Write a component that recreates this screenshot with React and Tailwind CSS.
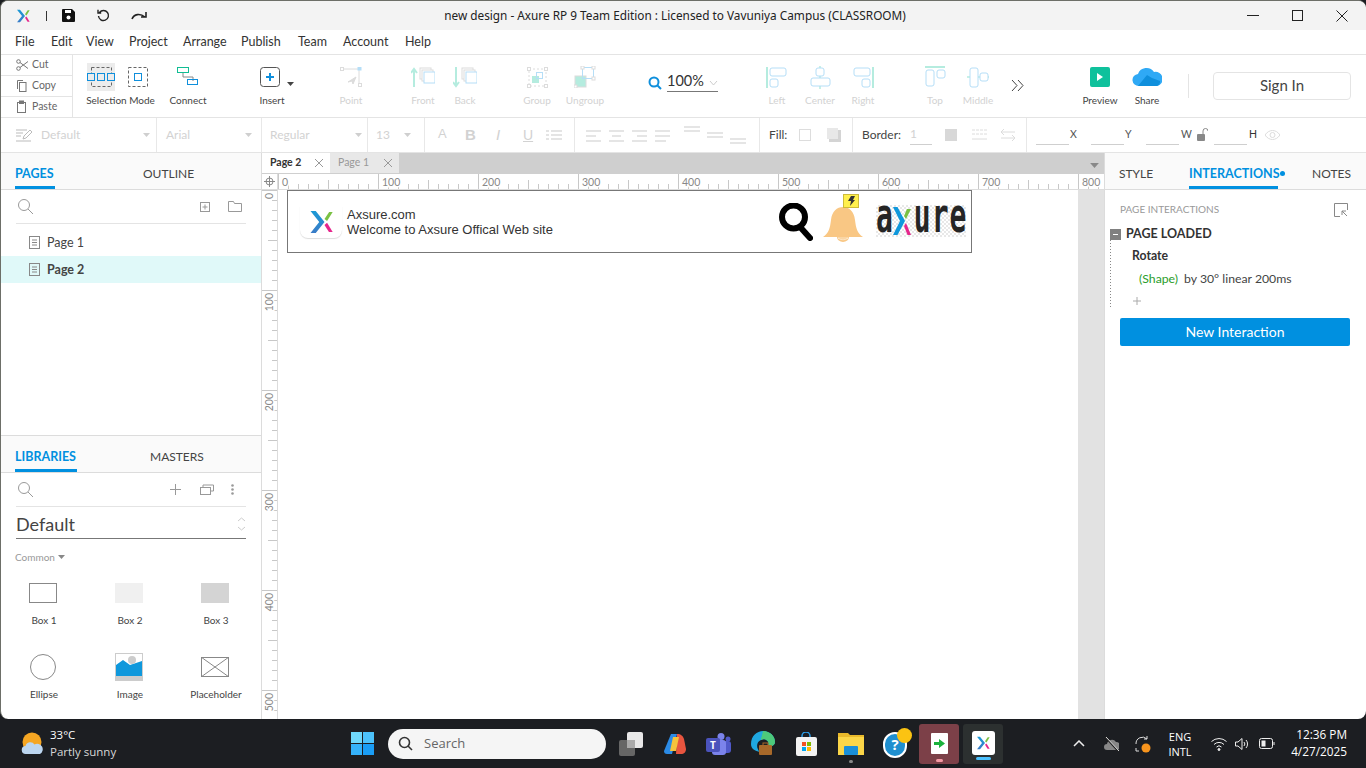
import React from "react";

const AxureX = ({ size = 24, className = "" }) => (
  <svg width={size} height={size} viewBox="0 0 24 24" className={className}>
    <defs>
      <linearGradient id="axg" x1="0" y1="0" x2="0" y2="1">
        <stop offset="0" stopColor="#1b9ad6" />
        <stop offset="1" stopColor="#3a7cc7" />
      </linearGradient>
    </defs>
    <path d="M3 2.500h4.500L15 12l-7.500 9.500H3L10.500 12z" fill="url(#axg)" />
    <path d="M15 9.500L19 3.500h3l-4.800 7.600z" fill="#7ac143" />
    <path d="M15 14.500l2.200-1.800L22 20.500h-3.200z" fill="#e6268c" />
  </svg>
);

const Caret = ({ className = "", color = "#cfcfcf" }) => (
  <svg width="7" height="4" viewBox="0 0 7 4" className={className}>
    <path d="M0 0h7L3.500 4z" fill={color} />
  </svg>
);

const Tool = ({ w, label, off, children }) => (
  <div className={`${w} flex flex-col items-center shrink-0 pt-[8px]`}>
    <div className="h-[28px] flex items-center justify-center gap-[13px] whitespace-nowrap">{children}</div>
    <div className={`mt-[3px] text-[10px] leading-[12px] whitespace-nowrap ${off ? "text-[#d2d2d2]" : "text-[#444]"}`}>{label}</div>
  </div>
);

const T = "#b5ecdf";
const B = "#b5def7";

const Arrange = ({ up }) => (
  <svg width="24" height="24" viewBox="0 0 24 24">
    <path d={up ? "M3 22V5M0 8l3-4 3 4" : "M3 2v19M0 17l3 4 3-4"} stroke={T} strokeWidth="2" fill="none" />
    <rect x="9" y="3" width="11" height="11" fill="#fff" stroke="#dcdcdc" />
    <rect x="11" y="5" width="11" height="11" fill="#fff" stroke="#dcdcdc" />
    <rect x="13" y="7" width="11" height="11" fill="#fff" stroke={B} />
  </svg>
);

const AlignIcon = ({ kind }) => {
  const m = {
    Left: <><path d="M1 1v21" stroke={T} strokeWidth="2" /><rect x="4" y="2" width="16" height="8" rx="2" fill="none" stroke={B} /><rect x="4" y="13" width="8" height="8" rx="2" fill="none" stroke={B} /></>,
    Center: <><path d="M11 0v23" stroke={T} strokeWidth="1.500" /><rect x="7" y="2" width="8" height="8" rx="2" fill="#fff" stroke={B} /><rect x="2" y="12" width="19" height="8" rx="2" fill="#fff" stroke={B} /></>,
    Right: <><path d="M21 1v21" stroke={T} strokeWidth="2" /><rect x="2" y="2" width="16" height="8" rx="2" fill="none" stroke={B} /><rect x="10" y="13" width="8" height="8" rx="2" fill="none" stroke={B} /></>,
    Top: <><path d="M1 1h20" stroke={T} strokeWidth="2" /><rect x="2" y="4" width="8" height="16" rx="2" fill="none" stroke={B} /><rect x="13" y="4" width="8" height="8" rx="2" fill="none" stroke={B} /></>,
    Middle: <><path d="M0 11h22" stroke={T} strokeWidth="1.500" /><rect x="3" y="2" width="8" height="19" rx="2" fill="#fff" stroke={B} /><rect x="13" y="7" width="8" height="8" rx="2" fill="#fff" stroke={B} /></>,
  };
  return <svg width="23" height="23" viewBox="0 0 23 23">{m[kind]}</svg>;
};

const ClipIcon = ({ name }) => {
  if (name === "Cut")
    return (
      <svg width="12" height="14" viewBox="0 0 12 14" fill="none" stroke="#777">
        <circle cx="2.500" cy="3.500" r="1.800" /><circle cx="2.500" cy="10.500" r="1.800" /><path d="M4 4.500l8 6M4 9.500l8-6" />
      </svg>
    );
  if (name === "Copy")
    return (
      <svg width="12" height="14" viewBox="0 0 12 14" fill="none" stroke="#777">
        <path d="M1.500 10V1.500H7" /><rect x="3.500" y="3.500" width="6.500" height="9" />
      </svg>
    );
  return (
    <svg width="12" height="14" viewBox="0 0 12 14" fill="none" stroke="#777">
      <rect x="1.500" y="2.500" width="8" height="10" /><rect x="3.500" y="1" width="4" height="2.500" fill="#777" />
    </svg>
  );
};

const Toolbar = () => (
  <div className="h-[63px] flex border-b border-[#e4e4e4] shrink-0">
    <div className="w-[72px] border-r border-[#e4e4e4] flex flex-col text-[10.500px] text-[#666] shrink-0">
      {["Cut", "Copy", "Paste"].map((l, i) => (
        <div key={l} className={`flex items-center pl-[15px] ${i < 2 ? "h-[21px] border-b border-[#e4e4e4]" : "flex-1"}`}>
          <ClipIcon name={l} />
          <span className="ml-[4px]">{l}</span>
        </div>
      ))}
    </div>
    <div className="ml-[12px]" />
    <Tool w="w-[71px]" label="Selection Mode">
      <div className="w-[28px] h-[28px] bg-[#ececec] flex items-center justify-center">
        <svg width="28" height="28" viewBox="0 0 28 28" fill="none">
          <rect x="4.500" y="4.500" width="20" height="19" stroke="#666" strokeDasharray="3 2" />
          <rect x="0.500" y="10.500" width="7" height="7" fill="#ececec" stroke="#0f8fdc" />
          <rect x="10.500" y="10.500" width="7" height="7" fill="#ececec" stroke="#0f8fdc" />
          <rect x="20.500" y="10.500" width="7" height="7" fill="#ececec" stroke="#0f8fdc" />
        </svg>
      </div>
      <svg width="20" height="20" viewBox="0 0 20 20" fill="none" className="mr-[7px]">
        <rect x="0.500" y="0.500" width="19" height="19" stroke="#666" strokeDasharray="3 2" />
        <rect x="6.500" y="6.500" width="7" height="7" stroke="#0f8fdc" />
      </svg>
    </Tool>
    <div className="ml-[12px]" />
    <Tool w="w-[40px]" label="Connect">
      <svg width="22" height="20" viewBox="0 0 22 20" fill="none">
        <path d="M6 6v4h10v4" stroke="#888" />
        <rect x="0.500" y="0.500" width="11" height="5" stroke="#11bd94" />
        <rect x="10.500" y="12.500" width="10" height="5" stroke="#0f8fdc" />
      </svg>
    </Tool>
    <div className="ml-[44px]" />
    <div className="relative">
      <Tool w="w-[40px]" label="Insert">
        <svg width="20" height="20" viewBox="0 0 20 20" fill="none" className="mr-[4px]">
          <rect x="0.500" y="0.500" width="19" height="19" rx="3" stroke="#555" />
          <path d="M10 6v8M6 10h8" stroke="#0f8fdc" strokeWidth="2" />
        </svg>
      </Tool>
      <Caret className="absolute left-[35px] top-[27px]" color="#444" />
    </div>
    <div className="ml-[39px]" />
    <Tool w="w-[40px]" label="Point" off>
      <svg width="22" height="20" viewBox="0 0 22 20" fill="none" stroke="#dcdcdc">
        <path d="M3 2h15M19 3v13" />
        <rect x="0.500" y="0.500" width="3" height="3" />
        <rect x="18" y="0" width="3" height="3" fill={B} stroke={B} />
        <rect x="18.500" y="16.500" width="3" height="3" />
        <path d="M8 15l8-5-3 7-1-3z" fill="#dcdcdc" />
      </svg>
    </Tool>
    <div className="ml-[32px]" />
    <Tool w="w-[40px]" label="Front" off><Arrange up /></Tool>
    <div className="ml-[2px]" />
    <Tool w="w-[40px]" label="Back" off><Arrange /></Tool>
    <div className="ml-[32px]" />
    <Tool w="w-[40px]" label="Group" off>
      <svg width="21" height="21" viewBox="0 0 21 21" fill="none">
        <rect x="2" y="2" width="17" height="17" stroke="#dcdcdc" strokeDasharray="2 2" />
        {[[0, 0], [17, 0], [0, 17], [17, 17]].map(([x, y]) => <rect key={x + "-" + y} x={x + .5} y={y + .5} width="3" height="3" fill="#fff" stroke="#dcdcdc" />)}
        <rect x="5" y="9" width="7" height="7" fill={T} />
        <rect x="9.500" y="5.500" width="6" height="6" stroke={B} />
      </svg>
    </Tool>
    <div className="ml-[4px]" />
    <Tool w="w-[48px]" label="Ungroup" off>
      <svg width="22" height="22" viewBox="0 0 22 22" fill="none">
        <rect x="1" y="10" width="11" height="11" fill={T} stroke="#dcdcdc" />
        <rect x="8.500" y="1.500" width="11" height="11" stroke={B} />
        <rect x="7" y="0" width="3" height="3" fill="#fff" stroke="#dcdcdc" /><rect x="18" y="0" width="3" height="3" fill="#fff" stroke="#dcdcdc" /><rect x="18" y="11" width="3" height="3" fill="#fff" stroke="#dcdcdc" /><rect x="0" y="19" width="3" height="3" fill="#fff" stroke="#dcdcdc" />
      </svg>
    </Tool>
    <div className="ml-[39px]" />
    <div className="w-[70px] shrink-0 flex items-start pt-[15px]">
      <svg width="14" height="14" viewBox="0 0 14 14" fill="none" className="mt-[6px]" stroke="#0f8fdc" strokeWidth="2"><circle cx="6" cy="6" r="4.500" /><path d="M9.500 9.500L13 13" /></svg>
      <div className="ml-[5px] w-[51px] h-[22px] border-b border-[#777] text-[14.500px] leading-[22px] text-[#333] flex items-center justify-between">
        <span>100%</span>
        <svg width="9" height="5" viewBox="0 0 9 5" fill="none" stroke="#ccc" className="mt-[5px]"><path d="M1 0l3.500 4L8 0" /></svg>
      </div>
    </div>
    <div className="ml-[39px]" />
    <Tool w="w-[40px]" label="Left" off><AlignIcon kind="Left" /></Tool>
    <div className="ml-[3px]" />
    <Tool w="w-[40px]" label="Center" off><AlignIcon kind="Center" /></Tool>
    <div className="ml-[3px]" />
    <Tool w="w-[40px]" label="Right" off><AlignIcon kind="Right" /></Tool>
    <div className="ml-[32px]" />
    <Tool w="w-[40px]" label="Top" off><AlignIcon kind="Top" /></Tool>
    <div className="ml-[3px]" />
    <Tool w="w-[40px]" label="Middle" off><AlignIcon kind="Middle" /></Tool>
    <div className="ml-[11px]" />
    <div className="w-[16px] shrink-0 flex justify-center pt-[25px]">
      <svg width="13" height="11" viewBox="0 0 13 11" fill="none" stroke="#444"><path d="M1 0l5 5.500L1 11M7 0l5 5.500L7 11" /></svg>
    </div>
    <div className="ml-[55px]" />
    <Tool w="w-[40px]" label="Preview">
      <div className="w-[20px] h-[20px] rounded-[2px] bg-[#0fc19c] flex items-center justify-center">
        <svg width="8" height="8" viewBox="0 0 8 8"><path d="M1 0l6 4-6 4z" fill="#fff" /></svg>
      </div>
    </Tool>
    <div className="ml-[7px]" />
    <Tool w="w-[40px]" label="Share">
      <svg width="30" height="20" viewBox="0 0 30 20">
        <path d="M7 19a6 6 0 01-1-12 9 9 0 0116-2 7 7 0 013 14z" fill="#2fa9f5" />
        <path d="M6 19l9-11 5 3 8 3a5 5 0 01-3 5z" fill="#0f8fdc" />
      </svg>
    </Tool>
    <div className="ml-[21px] mt-[19px] w-px h-[24px] bg-[#e4e4e4]" />
    <div className="ml-[24px] mt-[17px] w-[138px] h-[28px] border border-[#e4e4e4] rounded-[4px] flex items-center justify-center text-[15px] text-[#444] pb-[1px]">Sign In</div>
  </div>
);

const Line = ({ w, ml = "" }) => <div className={`${w} ${ml} border-b border-[#cfcfcf] h-[20px]`} />;

const BarLines = ({ rows }) => (
  <svg width="16" height="18" viewBox="0 0 16 18" stroke="#dcdcdc" strokeWidth="1.500">
    {rows.map(([a, b, y]) => <path key={y} d={`M${a} ${y}H${b}`} />)}
  </svg>
);

const FormatBar = () => (
  <div className="h-[35px] flex border-b border-[#e4e4e4] shrink-0 text-[12px] text-[#d2d2d2]">
    <div className="w-[156px] border-r border-[#e8e8e8] flex items-center pl-[15px] shrink-0">
      <svg width="16" height="13" viewBox="0 0 16 13" fill="none" stroke="#bbb"><path d="M0 1h11M0 4h7M0 7h5M0 12h15M7 10l1-3 6-6 2 2-6 6z" /></svg>
      <span className="ml-[9px] w-[60px]">Default</span><Caret className="ml-[42px]" />
    </div>
    <div className="w-[105px] border-r border-[#e8e8e8] flex items-center pl-[9px] shrink-0"><span className="w-[30px]">Arial</span><Caret className="ml-[49px]" /></div>
    <div className="w-[106px] border-r border-[#e8e8e8] flex items-center pl-[8px] shrink-0"><span className="w-[45px]">Regular</span><Caret className="ml-[40px]" /></div>
    <div className="w-[57px] border-r border-[#e8e8e8] flex items-center pl-[8px] shrink-0"><span className="w-[17px]">13</span><Caret className="ml-[11px]" /></div>
    <div className="w-[150px] border-r border-[#e8e8e8] flex items-center pl-[13px] shrink-0 text-[13px] font-['Liberation_Sans']">
      <span className="w-[27px] -mt-[3px]">A</span>
      <span className="w-[31px] font-bold text-[15px]">B</span>
      <span className="w-[27px] italic text-[15px]">I</span>
      <span className="w-[23px] underline text-[14px]">U</span>
      <svg width="16" height="12" viewBox="0 0 16 12" stroke="#dcdcdc" strokeWidth="1.500"><path d="M5 2h11M5 6h11M5 10h11M0 2h3M0 6h3M0 10h3" /></svg>
    </div>
    <div className="w-[185px] border-r border-[#e8e8e8] flex items-center pl-[11px] shrink-0">
      <div className="flex gap-[7px] mt-[1px]">
        <BarLines rows={[[0, 15, 4], [0, 10, 9], [0, 15, 14]]} />
        <BarLines rows={[[0, 15, 4], [3, 12, 9], [0, 15, 14]]} />
        <BarLines rows={[[0, 15, 4], [5, 15, 9], [0, 15, 14]]} />
        <BarLines rows={[[0, 15, 4], [0, 15, 9], [0, 11, 14]]} />
      </div>
      <div className="ml-[13px] flex gap-[7px]">
        <BarLines rows={[[0, 16, 1], [0, 16, 5]]} />
        <BarLines rows={[[0, 16, 7], [0, 16, 11]]} />
        <BarLines rows={[[0, 16, 13], [0, 16, 17]]} />
      </div>
    </div>
    <div className="w-[93px] border-r border-[#e8e8e8] flex items-center pl-[9px] shrink-0">
      <span className="text-[#444] w-[17px]">Fill:</span>
      <div className="ml-[13px] w-[12px] h-[12px] border border-[#ddd]" />
      <svg width="14" height="14" viewBox="0 0 14 14" className="ml-[16px]"><rect x="2" y="2" width="12" height="12" fill="#d4d4d4" /><rect width="11" height="11" fill="#e8e8e8" /></svg>
    </div>
    <div className="w-[174px] border-r border-[#e8e8e8] flex items-center pl-[9px] shrink-0">
      <span className="text-[#444] w-[39px]">Border:</span>
      <div className="ml-[9px] w-[22px] h-[20px] border-b border-[#cfcfcf] leading-[18px]">1</div>
      <div className="ml-[13px] w-[12px] h-[12px] bg-[#d8d8d8]" />
      <svg width="15" height="12" viewBox="0 0 15 12" className="ml-[15px]" stroke="#dcdcdc"><path d="M0 1h15M0 5h15" strokeDasharray="3 1" /><path d="M0 10h15" /></svg>
      <svg width="15" height="12" viewBox="0 0 15 12" fill="none" className="ml-[14px]" stroke="#dcdcdc"><path d="M0 3h14M3 0L0 3l3 3M0 9h14M11 6l3 3-3 3" /></svg>
    </div>
    <div className="flex items-center pl-[9px] text-[10.500px] text-[#555] pb-[1px]">
      <Line w="w-[33px]" /><span className="ml-[1px] w-[21px]">X</span>
      <Line w="w-[33px]" /><span className="ml-[1px] w-[21px]">Y</span>
      <Line w="w-[33px]" /><span className="ml-[2px] w-[16px]">W</span>
      <svg width="11" height="13" viewBox="0 0 11 13" fill="none"><path d="M6 6V3a2.500 2.500 0 015 0" stroke="#888" /><rect y="6" width="8" height="7" rx="1" fill="#888" /></svg>
      <Line w="w-[33px]" ml="ml-[6px]" /><span className="ml-[2px] w-[16px] text-[#333]">H</span>
      <svg width="15" height="10" viewBox="0 0 15 10" fill="none" stroke="#dcdcdc"><path d="M0 5c4-6 11-6 15 0-4 6-11 6-15 0z" /><circle cx="7.500" cy="5" r="2.500" /></svg>
    </div>
  </div>
);

const Tabs = ({ items, active }) => (
  <div className="h-[37px] bg-[#fafafa] border-b border-[#dcdcdc] flex shrink-0 text-[12px]">
    {items.map(([l, w, cls]) => (
      <div key={l} className={`${w} ${cls} shrink-0 h-[36px] flex items-center whitespace-nowrap ${l === active ? "text-[#0090e0] text-[12.500px] font-bold border-b-[3px] border-[#0090e0] pt-[9px]" : "text-[#444] pt-[6px]"}`}>
        {l}
      </div>
    ))}
  </div>
);

const SearchIcon = () => (
  <svg width="15" height="15" viewBox="0 0 15 15" fill="none" stroke="#999"><circle cx="6" cy="6" r="5.500" /><path d="M10 10l5 5" /></svg>
);

const PageIcon = () => (
  <svg width="11" height="13" viewBox="0 0 11 13" fill="none" stroke="#888"><rect x="0.500" y="0.500" width="10" height="12" /><path d="M3 4h5M3 6.500h5M3 9h5" /></svg>
);

const Widget = ({ label, children }) => (
  <div className="flex flex-col items-center w-[86px]">
    <div className="h-[28px] flex items-center justify-center">{children}</div>
    <div className="mt-[7px] ml-[2px] text-[10px] leading-[12px] text-[#444]">{label}</div>
  </div>
);

const LeftPanel = () => (
  <div className="w-[261px] border-r border-[#dcdcdc] flex flex-col shrink-0 h-full">
    <Tabs active="PAGES" items={[["PAGES", "w-[40px]", "ml-[14px]"], ["OUTLINE", "w-[52px]", "ml-[88px]"]]} />
    <div className="h-[246px] border-b border-[#dcdcdc] shrink-0">
      <div className="mx-[15px] h-[34px] border-b border-[#e4e4e4] flex items-center pl-[2px]">
        <SearchIcon />
        <svg width="10" height="10" viewBox="0 0 10 10" fill="none" stroke="#999" className="ml-[167px]"><rect x="0.500" y="0.500" width="9" height="9" /><path d="M5 2.500v5M2.500 5h5" /></svg>
        <svg width="14" height="11" viewBox="0 0 14 11" fill="none" stroke="#999" className="ml-[18px]"><path d="M.5 10.500V.5h5l1 2h7v8z" /></svg>
      </div>
      <div className="mt-[5px]">
        <div className="h-[27px] flex items-center pl-[28px] text-[12.500px] text-[#444]"><PageIcon /><span className="ml-[7px] pt-[1px]">Page 1</span></div>
        <div className="h-[27px] flex items-center pl-[28px] text-[12.500px] text-[#444] font-bold bg-[#e0f9f9]"><PageIcon /><span className="ml-[7px] pt-[1px]">Page 2</span></div>
      </div>
    </div>
    <Tabs active="LIBRARIES" items={[["LIBRARIES", "w-[62px]", "ml-[14px]"], ["MASTERS", "w-[56px]", "ml-[73px]"]]} />
    <div className="mx-[15px] h-[34px] border-b border-[#e4e4e4] flex items-center pl-[2px] shrink-0">
      <SearchIcon />
      <svg width="11" height="11" viewBox="0 0 11 11" fill="none" stroke="#999" className="ml-[137px]"><path d="M5.500 0v11M0 5.500h11" /></svg>
      <svg width="14" height="11" viewBox="0 0 14 11" fill="none" stroke="#999" className="ml-[19px]"><rect x="0.500" y="3.500" width="10" height="7" /><path d="M3 3V1h8M11 1h2.500v6H11" /></svg>
      <svg width="3" height="11" viewBox="0 0 3 11" fill="#999" className="ml-[17px]"><circle cx="1.500" cy="1.500" r="1.300" /><circle cx="1.500" cy="5.500" r="1.300" /><circle cx="1.500" cy="9.500" r="1.300" /></svg>
    </div>
    <div className="mx-[15px] h-[32px] border-b border-[#777] flex items-center justify-between text-[18px] text-[#444] shrink-0">
      <span className="pt-[3px]">Default</span>
      <svg width="9" height="14" viewBox="0 0 9 14" fill="none" stroke="#ccc" className="mr-[0px] mt-[3px]"><path d="M1 4l3.500-3L8 4M1 10l3.500 3L8 10" /></svg>
    </div>
    <div className="ml-[14px] mt-[11px] h-[14px] flex items-center text-[10px] text-[#999] shrink-0">Common <Caret className="ml-[3px]" color="#888" /></div>
    <div className="grid grid-cols-[86px_86px_86px] -ml-[1px] mt-[15px] gap-y-[27px]">
      <Widget label="Box 1"><div className="w-[28px] h-[20px] border border-[#888]" /></Widget>
      <Widget label="Box 2"><div className="w-[28px] h-[20px] bg-[#f0f0f0]" /></Widget>
      <Widget label="Box 3"><div className="w-[28px] h-[20px] bg-[#d4d4d4]" /></Widget>
      <Widget label="Ellipse"><div className="w-[26px] h-[26px] rounded-full border border-[#888]" /></Widget>
      <Widget label="Image">
        <svg width="28" height="28" viewBox="0 0 28 28"><rect width="28" height="28" fill="#fff" /><rect x="0.500" y="0.500" width="27" height="27" fill="none" stroke="#ccc" /><path d="M1 24V12l7-5 7 5 12-4v16z" fill="#0f98dc" /><circle cx="17" cy="7" r="4" fill="#ccc" /><rect y="23" width="28" height="5" fill="#ccc" /></svg>
      </Widget>
      <Widget label="Placeholder">
        <svg width="28" height="20" viewBox="0 0 28 20" fill="none" stroke="#888"><rect x="0.500" y="0.500" width="27" height="19" /><path d="M0 0l28 20M28 0L0 20" /></svg>
      </Widget>
    </div>
  </div>
);

const HRuler = () => {
  const ticks = [];
  for (let v = 0; v <= 820; v += 10) ticks.push(v);
  return (
    <svg width="826" height="15" viewBox="0 0 826 15" className="shrink-0">
      {ticks.map((v) => {
        const top = v % 100 === 0 ? 0 : v % 50 === 0 ? 6 : 10;
        return <path key={v} d={`M${v + .5} ${top}V15`} stroke="#c8c8c8" />;
      })}
      {[0, 100, 200, 300, 400, 500, 600, 700, 800].map((v) => (
        <text key={v} x={v + 4} y="12" fontSize="10.500" fill="#888" stroke="#fff" strokeWidth="3" paintOrder="stroke" fontFamily="Lato">{v}</text>
      ))}
    </svg>
  );
};

const VRuler = () => {
  const ticks = [];
  for (let v = 0; v <= 530; v += 10) ticks.push(v);
  return (
    <svg width="15" height="529" viewBox="0 0 15 529" className="shrink-0">
      {ticks.map((v) => {
        const left = v % 100 === 0 ? 0 : v % 50 === 0 ? 6 : 10;
        return <path key={v} d={`M${left} ${v + .5}H15`} stroke="#c8c8c8" />;
      })}
      {[0, 100, 200, 300, 400, 500].map((v) => (
        <text key={v} x="0" y="0" transform={`translate(11 ${v + 3}) rotate(-90)`} textAnchor="end" fontSize="10.500" fill="#888" stroke="#fff" strokeWidth="3" paintOrder="stroke" fontFamily="Lato">{v}</text>
      ))}
    </svg>
  );
};

const CloseX = ({ c = "#999" }) => (
  <svg width="8" height="8" viewBox="0 0 8 8" stroke={c}><path d="M0 0l8 8M8 0L0 8" /></svg>
);

const Artboard = () => (
  <div className="ml-[9px] w-[685px] h-[63px] border border-[#777] flex items-center bg-white shrink-0">
    <div className="ml-[12px] w-[42px] h-[32px] rounded-b-[8px] shadow-[0_1px_1px_#ddd] flex items-center justify-center shrink-0">
      <AxureX size={28} />
    </div>
    <div className="ml-[5px] w-[207px] shrink-0 whitespace-nowrap text-[13px] leading-[15px] text-[#333] font-['Liberation_Sans']">
      <div>Axsure.com</div>
      <div>Welcome to Axsure Offical Web site</div>
    </div>
    <svg width="34" height="38" viewBox="0 0 34 38" fill="none" stroke="#000" strokeWidth="6" className="ml-[225px] shrink-0">
      <circle cx="14.500" cy="14" r="11.500" /><path d="M22 25l9 10" strokeLinecap="round" />
    </svg>
    <div className="relative ml-[10px] w-[42px] h-[38px] shrink-0">
      <svg width="40" height="38" viewBox="0 0 40 38" className="mt-[1px]">
        <path d="M0 33c6-4 7-9 8-17C9 7 14 3 20 3s11 4 12 13c1 8 2 13 8 17z" fill="#f9c784" />
        <path d="M14 33a6 5 0 0012 0z" fill="#f9c784" />
        <path d="M15 34a6 4 0 0010 0z" fill="none" stroke="#fff" strokeOpacity=".5" />
      </svg>
      <div className="absolute left-[20px] -top-[9px] w-[16px] h-[14px] bg-[#fff04d] border border-[#cdbb3a] flex items-center justify-center">
        <svg width="7" height="10" viewBox="0 0 7 10"><path d="M3 0h4L5 4h2L2 10l1-5H0z" fill="#333" /></svg>
      </div>
    </div>
    <div className="ml-[11px] w-[90px] h-[32px] flex items-center shrink-0 bg-[repeating-conic-gradient(#e8e8e8_0_25%,#ffffff_0_50%)] bg-[length:4px_4px] font-['DejaVu_Sans_Mono'] font-bold text-[#252525] text-[28px] leading-[28px] -mt-[1px]">
      <span className="scale-y-[1.700] -mt-[9px]">a</span>
      <svg width="18" height="28" viewBox="0 0 18 28" className="shrink-0">
        <path d="M0 0h4.500L12 14 4.500 28H0l7-14z" fill="#0f98dc" />
        <path d="M11 9l3-7h4l-5 10z" fill="#7ac143" /><path d="M11 19l2-3 5 12h-3.500z" fill="#e6268c" />
      </svg>
      <span className="scale-y-[1.700] -mt-[9px] ml-[3px] tracking-[1px]">ure</span>
    </div>
  </div>
);

const Center = () => (
  <div className="w-[842px] flex flex-col shrink-0 h-full">
    <div className="h-[21px] bg-[#cfcfcf] flex text-[10.500px] shrink-0">
      <div className="w-[68px] h-[20px] bg-white flex items-center pl-[8px] font-bold text-[#333]"><span className="w-[32px]">Page 2</span><span className="ml-[13px] flex"><CloseX /></span></div>
      <div className="w-[69px] h-[20px] bg-[#e8e8e8] flex items-center pl-[8px] text-[#999]"><span className="w-[32px]">Page 1</span><span className="ml-[14px] flex"><CloseX /></span></div>
      <div className="ml-auto mr-[5px] mt-[10px]"><Caret color="#888" className="block w-[9px] h-[5px]" /></div>
    </div>
    <div className="h-[16px] flex border-b border-[#dcdcdc] shrink-0 bg-white">
      <div className="w-[16px] h-[15px] border-r border-[#dcdcdc] flex items-center justify-center shrink-0">
        <svg width="11" height="11" viewBox="0 0 11 11" fill="none" stroke="#888"><circle cx="5.500" cy="5.500" r="3.500" /><path d="M5.500 0v11M0 5.500h11" /></svg>
      </div>
      <HRuler />
    </div>
    <div className="flex-1 flex min-h-0">
      <div className="w-[16px] border-r border-[#dcdcdc] shrink-0"><VRuler /></div>
      <div className="flex-1 flex bg-white min-w-0">
        <Artboard />
        <div className="ml-auto w-[26px] bg-[#e2e2e2] h-full shrink-0" />
      </div>
    </div>
  </div>
);

const RightPanel = () => (
  <div className="flex-1 border-l border-[#dcdcdc] flex flex-col h-full min-w-0">
    <div className="h-[37px] bg-[#fafafa] border-b border-[#dcdcdc] flex shrink-0 text-[12px] text-[#444]">
      <div className="ml-[14px] w-[36px] h-[36px] flex items-center pt-[6px]">STYLE</div>
      <div className="ml-[34px] w-[89px] h-[36px] flex items-center text-[12.500px] font-bold text-[#0090e0] border-b-[3px] border-[#0090e0] pt-[9px] whitespace-nowrap relative">INTERACTIONS
        <div className="absolute left-[91px] top-[18px] w-[5px] h-[5px] rounded-full bg-[#0090e0]" />
      </div>
      <div className="ml-[34px] w-[40px] h-[36px] flex items-center pt-[6px]">NOTES</div>
    </div>
    <div className="flex items-center justify-between pl-[15px] pr-[18px] mt-[12px] h-[14px]">
      <span className="text-[10px] text-[#999]">PAGE INTERACTIONS</span>
      <svg width="14" height="14" viewBox="0 0 14 14" fill="none" stroke="#888" className="mt-[2px]"><path d="M6 13.500H.5V.5h13V7M13 13L8 8M8 12V8h4" /></svg>
    </div>
    <div className="ml-[5px] mt-[12px] flex items-center h-[12px]">
      <div className="w-[11px] h-[11px] bg-[#808080] flex items-center justify-center shrink-0"><div className="w-[5px] h-px bg-white" /></div>
      <span className="ml-[5px] pt-[1px] text-[12.500px] font-bold text-[#333]">PAGE LOADED</span>
    </div>
    <div className="ml-[5px] h-[68px] pl-[22px] text-[12.250px] text-[#444] bg-[repeating-linear-gradient(to_bottom,#888888_0_1px,transparent_1px_3px)] bg-[length:1px_100%] bg-no-repeat">
      <div className="h-[32px] flex items-center font-bold text-[#333]">Rotate</div>
      <div className="mt-[1px] h-[12px] flex items-center pl-[7px]"><span className="text-[#2a9d2a]">(Shape)</span><span className="ml-[6px]">by 30° linear 200ms</span></div>
      <div className="pl-[1px] mt-[12px]"><svg width="8" height="8" viewBox="0 0 8 8" stroke="#aaa"><path d="M4 0v8M0 4h8" /></svg></div>
    </div>
    <div className="ml-[15px] mt-[10px] w-[230px] h-[28px] rounded-[2px] bg-[#0090e0] text-white text-[14px] flex items-center justify-center pb-[1px]">New Interaction</div>
  </div>
);

const AppWindow = () => (
  <div className="h-[719px] shrink-0 bg-white rounded-[8px] border-t border-l border-[#6d6f68] flex flex-col overflow-hidden font-['Lato']">
    <div className="h-[29px] bg-[#f3f3f3] flex items-center shrink-0">
      <AxureX size={16} className="ml-[14px]" />
      <div className="ml-[15px] w-px h-[10px] bg-[#333]" />
      <svg width="13" height="13" viewBox="0 0 13 13" className="ml-[15px]"><path d="M1 0h9l3 3v9a1 1 0 01-1 1H1a1 1 0 01-1-1V1a1 1 0 011-1z" fill="#111" /><rect x="3" y="1" width="6" height="3" fill="#fff" /><circle cx="6.500" cy="8.500" r="2" fill="#fff" /></svg>
      <svg width="13" height="13" viewBox="0 0 13 13" fill="none" stroke="#222" strokeWidth="1.400" className="ml-[22px]"><path d="M2.500 3.500A5 5 0 111.500 7M1 .8v3.200h3.200" /></svg>
      <svg width="16" height="9" viewBox="0 0 16 9" fill="none" stroke="#222" strokeWidth="1.600" className="ml-[21px]"><path d="M1 8c2-5 8-6 13-2M15 1v5h-5" /></svg>
      <div className="ml-[297px] text-[11.800px] text-[#222] whitespace-nowrap font-['Noto_Sans'] w-[462px] text-center">new design - Axure RP 9 Team Edition : Licensed to Vavuniya Campus (CLASSROOM)</div>
      <svg width="12" height="1" viewBox="0 0 12 1" className="ml-[341px]"><path d="M0 .5h12" stroke="#222" /></svg>
      <svg width="11" height="11" viewBox="0 0 11 11" fill="none" stroke="#222" className="ml-[33px]"><rect x="0.500" y="0.500" width="10" height="10" /></svg>
      <svg width="12" height="12" viewBox="0 0 12 12" stroke="#222" className="ml-[33px]"><path d="M.5.5l11 11M11.500.5l-11 11" /></svg>
    </div>
    <div className="h-[25px] flex items-center border-b border-[#e4e4e4] pl-[14px] pt-[1px] text-[12.500px] text-[#333] shrink-0">
      {[["File", "w-[36px]"], ["Edit", "w-[35px]"], ["View", "w-[43px]"], ["Project", "w-[54px]"], ["Arrange", "w-[58px]"], ["Publish", "w-[57px]"], ["Team", "w-[45px]"], ["Account", "w-[62px]"], ["Help", "w-[40px]"]].map(([l, w]) => (
        <div key={l} className={w}>{l}</div>
      ))}
    </div>
    <Toolbar />
    <FormatBar />
    <div className="flex-1 flex min-h-0">
      <LeftPanel />
      <Center />
      <RightPanel />
    </div>
  </div>
);

const Taskbar = () => (
  <div className="h-[49px] flex items-center shrink-0 text-white font-['Open_Sans'] bg-[#1c1e22]">
    <svg width="23" height="24" viewBox="0 0 23 24" className="ml-[21px] shrink-0">
      <circle cx="11" cy="10" r="9.500" fill="#f5a623" />
      <path d="M5 22a4 4 0 01-.5-8 5 5 0 019-1.500A4.500 4.500 0 0119 22z" fill="#bcd6f0" />
    </svg>
    <div className="ml-[6px] w-[80px] text-[11.500px] leading-[17px] -mt-[1px]">
      <div>33°C</div>
      <div className="text-[#d8d8d8] whitespace-nowrap">Partly sunny</div>
    </div>
    <div className="ml-[221px] grid grid-cols-2 gap-[1px] w-[23px] h-[23px] shrink-0">
      <div className="bg-[#6fd8fb]" /><div className="bg-[#4cc2fb]" /><div className="bg-[#35b2fa]" /><div className="bg-[#1a9df5]" />
    </div>
    <div className="ml-[14px] w-[218px] h-[30px] rounded-full bg-[#f5f5f5] flex items-center pl-[10px] text-[13px] text-[#666] shrink-0">
      <svg width="15" height="15" viewBox="0 0 15 15" fill="none" stroke="#333" strokeWidth="1.600"><circle cx="6.500" cy="6.500" r="5" /><path d="M10 10l4 4" /></svg>
      <span className="ml-[11px]">Search</span>
    </div>
    <svg width="24" height="24" viewBox="0 0 24 24" className="ml-[13px] shrink-0"><rect y="8" width="16" height="16" rx="2" fill="#666" /><rect x="8" width="16" height="16" rx="2" fill="#e8e8e8" /><rect x="8" y="8" width="8" height="8" fill="#aaa" /></svg>
    <svg width="22" height="22" viewBox="0 0 22 22" className="ml-[21px] shrink-0"><path d="M7 1h6l-5 20H3a3 3 0 01-3-3z" fill="#2b8be6" /><path d="M13 1c4 0 6 2 7 5l2 10c0 3-2 5-5 5h-5z" fill="#e8553f" /><path d="M9 4h6l-3 14H6z" fill="#f6c23c" /></svg>
    <svg width="25" height="22" viewBox="0 0 25 22" className="ml-[20px] shrink-0"><circle cx="15" cy="3.500" r="3.500" fill="#7b83eb" /><circle cx="22" cy="6" r="2.500" fill="#5059c9" /><rect x="14" y="8" width="11" height="12" rx="3" fill="#5059c9" /><rect x="6" y="7" width="14" height="15" rx="3" fill="#7b83eb" /><rect y="5" width="14" height="14" rx="2" fill="#4b53bc" /><text x="7" y="16" textAnchor="middle" fontSize="10" fontWeight="700" fill="#fff" fontFamily="Open Sans">T</text></svg>
    <svg width="25" height="25" viewBox="0 0 25 25" className="ml-[19px] shrink-0"><path d="M1 13C1 5 7 0 13 0c7 0 12 5 12 11 0 3-3 5-7 4 2-5-3-8-7-6-5 2-5 8-1 12-5-1-9-3-9-8z" fill="#1fa7e0" /><path d="M11 9c4-2 9 1 7 6 4 1 7-1 7-4C25 5 20 0 13 0c-1 5-2 7-2 9z" fill="#4dc97a" /><rect x="9" y="14" width="13" height="10" rx="1" fill="#a8692a" /><rect x="13" y="12" width="5" height="3" fill="none" stroke="#a8692a" /></svg>
    <svg width="21" height="24" viewBox="0 0 21 24" className="ml-[21px] shrink-0"><path d="M6 6V4a4 4 0 018 0v2" fill="none" stroke="#2b9de8" strokeWidth="1.500" /><rect y="5" width="21" height="19" rx="2" fill="#f3f3f3" /><rect x="6" y="10" width="4" height="4" fill="#f25022" /><rect x="11" y="10" width="4" height="4" fill="#7fba00" /><rect x="6" y="15" width="4" height="4" fill="#00a4ef" /><rect x="11" y="15" width="4" height="4" fill="#ffb900" /></svg>
    <div className="relative ml-[21px] w-[26px] h-[26px] shrink-0">
      <svg width="26" height="24" viewBox="0 0 26 24"><path d="M0 2h10l2 2h14v20H0z" fill="#e9b92b" /><rect y="6" width="26" height="18" fill="#fbd648" /><rect x="6" y="15" width="14" height="9" rx="1" fill="#1a8fd8" /></svg>
      <div className="absolute left-[11px] top-[29px] w-[4px] h-[3px] rounded-full bg-[#888]" />
    </div>
    <div className="relative ml-[19px] w-[28px] h-[28px] shrink-0">
      <div className="absolute left-0 top-[2px] w-[24px] h-[26px] rounded-full bg-[#1f8fcf] border-2 border-white flex items-center justify-center text-[15px] font-bold leading-none">?</div>
      <div className="absolute left-[14px] -top-[2px] w-[15px] h-[15px] rounded-full bg-[#fbc312]" />
    </div>
    <div className="ml-[8px] w-[40px] h-[40px] rounded-[3px] bg-[#7c4048] flex flex-col items-center pt-[9px] shrink-0">
      <div className="w-[17px] h-[21px] bg-white rounded-[1px] flex items-center justify-center">
        <svg width="11" height="9" viewBox="0 0 11 9"><path d="M0 3h5V0l6 4.500L5 9V6H0z" fill="#1bb13c" /></svg>
      </div>
      <div className="mt-[5px] w-[7px] h-[3px] rounded-full bg-[#f49aa5]" />
    </div>
    <div className="ml-[4px] w-[40px] h-[40px] rounded-[3px] bg-[#2c3030] flex flex-col items-center pt-[7px] shrink-0">
      <div className="w-[23px] h-[24px] bg-white rounded-[3px] flex items-center justify-center"><AxureX size={16} /></div>
      <div className="mt-[2px] w-[15px] h-[3px] rounded-full bg-[#4cc2ff]" />
    </div>
    <svg width="12" height="7" viewBox="0 0 12 7" fill="none" stroke="#eee" strokeWidth="1.500" className="ml-[70px] shrink-0"><path d="M1 6l5-5 5 5" /></svg>
    <svg width="15" height="14" viewBox="0 0 15 14" className="ml-[19px] shrink-0"><path d="M3 13a3 3 0 010-6 5 5 0 019-2 3.500 3.500 0 010 8z" fill="#888" /><path d="M1 0l13 14" stroke="#222" strokeWidth="1.500" /><path d="M2 0l13 14" stroke="#ddd" /></svg>
    <svg width="17" height="18" viewBox="0 0 17 18" fill="none" stroke="#ddd" className="ml-[15px] shrink-0"><path d="M2 9a6.500 6.500 0 0111-5M13 1v3h-3M14 11a6.500 6.500 0 01-3 4M2 13v3h3" /><circle cx="12" cy="13" r="4.500" fill="#f7941d" stroke="none" /></svg>
    <div className="ml-[16px] w-[26px] text-[11px] leading-[15px] text-center shrink-0"><div>ENG</div><div>INTL</div></div>
    <svg width="16" height="14" viewBox="0 0 16 14" fill="none" stroke="#eee" className="ml-[18px] shrink-0"><path d="M.5 4.500a11 11 0 0115 0M3 7.500a7 7 0 0110 0M5.500 10a3.500 3.500 0 015 0" /><circle cx="8" cy="12.500" r="1" fill="#eee" /></svg>
    <svg width="14" height="14" viewBox="0 0 14 14" fill="none" stroke="#eee" className="ml-[8px] shrink-0"><path d="M.5 5v4h2.500l4 3.500v-11L3 5zM9 5a3 3 0 010 4M11 3a6 6 0 010 8" /></svg>
    <svg width="16" height="11" viewBox="0 0 16 11" fill="none" stroke="#eee" className="ml-[10px] shrink-0"><rect x="0.500" y="0.500" width="13" height="10" rx="2" /><rect x="2.500" y="2.500" width="4" height="6" fill="#eee" stroke="none" /><path d="M15 4v3" /></svg>
    <div className="ml-auto mr-[19px] text-[11.800px] leading-[17px] text-right shrink-0 -mt-[1px]"><div>12:36 PM</div><div>4/27/2025</div></div>
  </div>
);

export default function App() {
  return (
    <div className="w-[1366px] h-[768px] bg-[#1c1e22] flex flex-col overflow-hidden">
      <AppWindow />
      <Taskbar />
    </div>
  );
}
